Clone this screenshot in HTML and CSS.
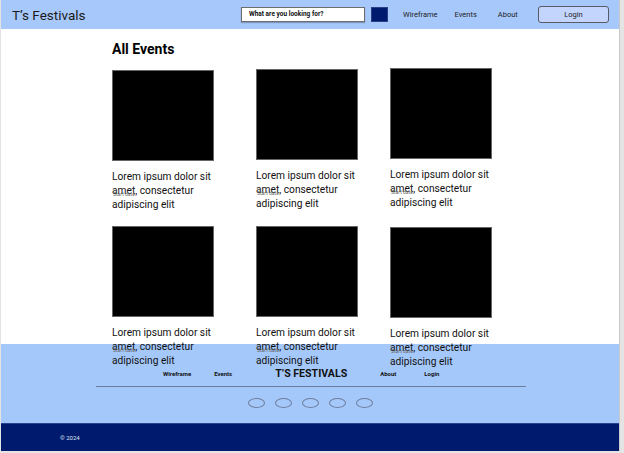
FILE: index.html
```html
<!DOCTYPE html>
<html lang="en">
<head>
<meta charset="utf-8">
<title>T's Festivals</title>
<link rel="stylesheet" href="styles.css">
</head>
<body>
<div class="frame">
  <header class="topbar">
    <div class="brand">T’s Festivals</div>
    <div class="search">
      <div class="search-input">What are you looking for?</div>
      <div class="search-btn"></div>
    </div>
    <nav class="top-nav">
      <a>Wireframe</a>
      <a>Events</a>
      <a>About</a>
    </nav>
    <button class="login">Login</button>
  </header>

  <main class="content">
    <h1 class="title">All Events</h1>
    <div class="grid">
      <div class="card"><div class="thumb"></div><p class="desc">Lorem ipsum dolor sit amet, consectetur adipiscing elit</p><span class="date">Start date</span></div>
      <div class="card up1"><div class="thumb"></div><p class="desc">Lorem ipsum dolor sit amet, consectetur adipiscing elit</p><span class="date">Start date</span></div>
      <div class="card up2"><div class="thumb"></div><p class="desc">Lorem ipsum dolor sit amet, consectetur adipiscing elit</p><span class="date">Start date</span></div>
      <div class="card"><div class="thumb"></div><p class="desc">Lorem ipsum dolor sit amet, consectetur adipiscing elit</p><span class="date">Start date</span></div>
      <div class="card"><div class="thumb"></div><p class="desc">Lorem ipsum dolor sit amet, consectetur adipiscing elit</p><span class="date">Start date</span></div>
      <div class="card down1"><div class="thumb"></div><p class="desc">Lorem ipsum dolor sit amet, consectetur adipiscing elit</p><span class="date">Start date</span></div>
    </div>
  </main>

  <footer class="site-footer">
    <div class="foot-nav">
      <a class="fl fl-wire">Wireframe</a>
      <a class="fl fl-events">Events</a>
      <span class="foot-brand">T’S FESTIVALS</span>
      <a class="fl fl-about">About</a>
      <a class="fl">Login</a>
    </div>
    <div class="rule"></div>
    <div class="socials">
      <span class="dot"></span><span class="dot"></span><span class="dot"></span><span class="dot"></span><span class="dot"></span>
    </div>
  </footer>
  <div class="copyright">© 2024</div>
</div>
</body>
</html>
```

FILE: styles.css
```css
* { box-sizing: border-box; }

html, body {
  margin: 0;
  padding: 0;
}

body {
  background: #e4e4e4;
  font-family: Roboto, "Liberation Sans", sans-serif;
  color: #111;
  width: 624px;
  height: 453px;
  overflow: hidden;
}

.frame {
  margin-left: 1px;
  width: 619px;
  height: 451px;
  background: #fff;
  border-right: 1px solid #c9c9c9;
  display: flex;
  flex-direction: column;
}

/* header */
.topbar {
  height: 29px;
  flex: none;
  background: #a7c8fb;
  display: flex;
  align-items: center;
  padding-left: 11px;
}

.brand {
  font-size: 13.5px;
  color: #1a1a1a;
  width: 229px;
  line-height: 18px;
}

.search {
  display: flex;
  align-items: center;
  gap: 6px;
}

.search-input {
  width: 124px;
  height: 15px;
  background: #fff;
  border: 1px solid #6d6d6d;
  box-shadow: 0 1px 1px rgba(0,0,0,0.25);
  font-size: 6.5px;
  font-weight: 700;
  line-height: 13px;
  padding-left: 7px;
  color: #111;
}

.search-btn {
  width: 17px;
  height: 15px;
  background: #001a6e;
  border: 1px solid #2c3f86;
}

.top-nav {
  display: flex;
  margin-left: 15px;
  font-size: 7.5px;
  color: #222;
}

.top-nav a { margin-right: 17px; }
.top-nav a:nth-child(2) { margin-right: 21px; }

.login {
  margin-left: auto;
  margin-right: 10px;
  width: 71px;
  height: 17px;
  background: #c3d4fd;
  border: 1px solid #5a5a66;
  border-radius: 3px;
  font-family: Roboto, "Liberation Sans", sans-serif;
  font-size: 7.5px;
  color: #222;
  padding: 0;
}

/* content */
.content {
  height: 315px;
  flex: none;
  padding: 11px 0 0 111px;
}

.title {
  margin: 0;
  font-size: 14px;
  font-weight: 700;
  line-height: 18px;
  color: #000;
}

.grid {
  margin-top: 12px;
  display: grid;
  grid-template-columns: 144px 134px 110px;
  row-gap: 14px;
}

.card {
  position: relative;
  width: 110px;
}

.card.up1 { margin-top: -1px; }
.card.up2 { margin-top: -2px; }
.card.down1 { margin-top: 1px; }

.thumb {
  width: 102px;
  height: 91px;
  background: #000;
  border: 1px solid #666;
}

.desc {
  margin: 9px 0 0;
  font-size: 10.2px;
  line-height: 14px;
  color: #111;
}

.date {
  position: absolute;
  left: 1px;
  top: 121px;
  font-size: 5px;
  line-height: 6px;
  color: #666;
}

/* footer */
.site-footer {
  height: 79px;
  flex: none;
  background: #a5c8fb;
  padding-top: 22px;
  display: flex;
  flex-direction: column;
  align-items: center;
}

.foot-nav {
  align-self: flex-start;
  display: flex;
  align-items: center;
  height: 14px;
  margin-left: 162px;
}

.fl {
  font-size: 6px;
  font-weight: 700;
  color: #111;
}

.fl-wire { margin-right: 23px; }
.fl-events { margin-right: 43px; }
.fl-about { margin-right: 28px; }

.foot-brand {
  font-size: 10.6px;
  font-weight: 700;
  color: #111;
  margin-right: 33px;
}

.rule {
  margin-top: 6px;
  width: 430px;
  height: 1px;
  background: #6c7d9c;
  margin-left: 2px;
}

.socials {
  margin-top: 11px;
  display: flex;
  gap: 10px;
}

.dot {
  width: 17px;
  height: 10px;
  border: 1px solid #6f7f9d;
  border-radius: 50%;
}

.copyright {
  height: 28px;
  flex: none;
  background: #001a6e;
  border-top: 1px solid #2a4290;
  color: #dfe3f0;
  font-size: 6px;
  line-height: 28px;
  padding-left: 59px;
}
```
